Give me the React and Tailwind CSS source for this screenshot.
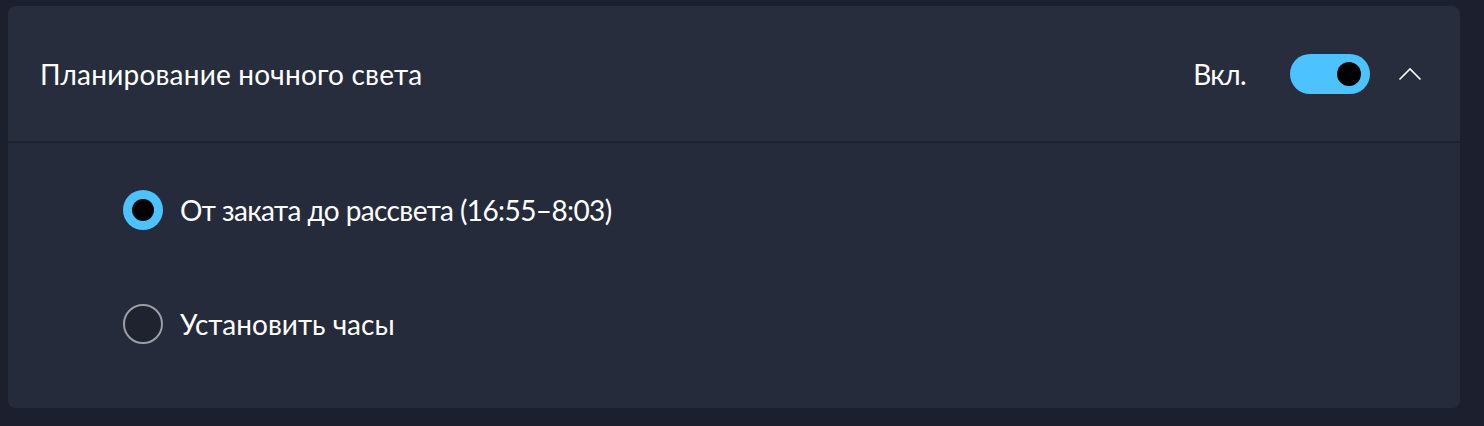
const Radio = ( { checked } ) =>
	checked ? (
		<span className="flex items-center justify-center size-10 rounded-full bg-[#4cc2ff]">
			<span className="size-[22px] rounded-full bg-black" />
		</span>
	) : (
		<span className="size-10 rounded-full border-2 border-[#9b9ea6] bg-[#1f2330]" />
	);

const Option = ( { checked, label, className } ) => (
	<div className="flex items-center gap-[17px] h-[114px] pl-[115px]">
		<Radio checked={ checked } />
		<span className={ `text-[28px] leading-none text-white ${ className || '' }` }>{ label }</span>
	</div>
);

export default function App() {
	return (
		<div className="min-h-[426px] bg-[#1b1f2e] pt-[6px] pl-2 pr-6" style={ { fontFamily: 'Lato, "Noto Sans", sans-serif' } }>
			<div className="w-[1452px] rounded-lg bg-[#282d3e] overflow-hidden">
				{ /* Header */ }
				<div className="flex items-center h-[135px] pl-8 pr-[38px]">
					<span className="flex-1 text-[28px] leading-none text-white tracking-[0.2px]">
						Планирование ночного света
					</span>
					<span className="text-[28px] leading-none text-white tracking-[-0.6px]">Вкл.</span>
					<span className="ml-[44px] flex items-center justify-end w-20 h-10 px-[9px] rounded-full bg-[#4cc2ff]">
						<span className="size-6 rounded-full bg-black" />
					</span>
					<svg className="ml-[28px]" width="24" height="14" viewBox="0 0 24 14" fill="none">
						<polyline points="1.5,12.5 12,2 22.5,12.5" stroke="white" strokeWidth="1.6" />
					</svg>
				</div>
				<div className="h-[2px] bg-[#1d2130]" />
				{ /* Body */ }
				<div className="bg-[#262b3b] pt-[10px] pb-[27px]">
					<Option checked label="От заката до рассвета (16:55–8:03)" className="tracking-[-0.6px]" />
					<Option label="Установить часы" />
				</div>
			</div>
		</div>
	);
}
